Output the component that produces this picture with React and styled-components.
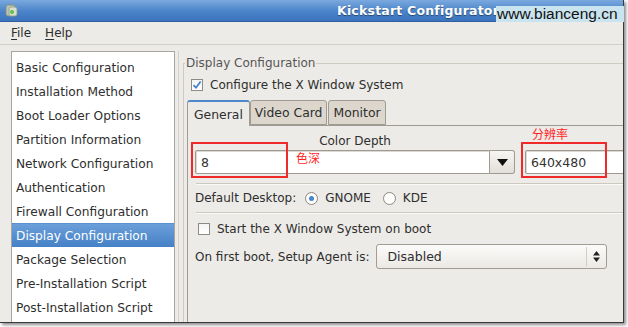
import React from "react";
import styled, { createGlobalStyle } from "styled-components";

const Global = createGlobalStyle`
  html, body { margin: 0; padding: 0; background: #ffffff; }
  body { font-family: "DejaVu Sans", Verdana, sans-serif; font-size: 12px; color: #2e2e2e; }
  * { box-sizing: border-box; }
`;

const Stage = styled.div`
  width: 628px;
  height: 327px;
  position: relative;
  overflow: hidden;
  background: #ffffff;
`;

const Window = styled.div`
  width: 624px;
  height: 323px;
  display: flex;
  flex-direction: column;
  overflow: hidden;
  background: #edebe7;
  border-right: 1px solid #3a3a3a;
  border-bottom: 1px solid #3a3a3a;
  box-shadow: 2px 2px 3px rgba(0, 0, 0, 0.45);
`;

const TitleBar = styled.div`
  height: 22px;
  flex: none;
  display: flex;
  align-items: center;
  padding-left: 5px;
  background: linear-gradient(#7aa9de, #4a83c9 55%, #3b74bd);
  border-bottom: 1px solid #2e5f9e;
`;

const AppIcon = styled.svg`
  width: 13px;
  height: 15px;
  flex: none;
`;

const Title = styled.div`
  margin-left: 319px;
  font-weight: bold;
  font-size: 12.5px;
  letter-spacing: 0.2px;
  color: #ffffff;
  text-shadow: 0 1px 1px rgba(0, 0, 0, 0.45);
  white-space: nowrap;
`;

const Watermark = styled.div`
  position: absolute;
  left: 496px;
  top: 6px;
  width: 128px;
  height: 16px;
  background: #c9e3ef;
  color: #111;
  font-family: "Liberation Sans", Arial, sans-serif;
  font-size: 15.5px;
  line-height: 16px;
  padding-left: 1px;
  white-space: nowrap;
  overflow: hidden;
`;

const MenuBar = styled.div`
  height: 23px;
  flex: none;
  display: flex;
  align-items: center;
  gap: 14px;
  padding-left: 11px;
  border-bottom: 1px solid #d3cfc8;
  background: #edebe7;
`;

const MenuItem = styled.span`
  font-size: 12px;
  color: #2e2e2e;
  & u { text-decoration: underline; text-underline-offset: 2px; }
`;

const Body = styled.div`
  flex: 1;
  display: flex;
  padding: 6px 0 0 11px;
  min-height: 0;
`;

const SideList = styled.div`
  width: 164px;
  flex: none;
  background: #ffffff;
  border: 1px solid #a9a49c;
  border-bottom: none;
  padding: 3px 0 0 0;
  display: flex;
  flex-direction: column;
`;

const SideItem = styled.div`
  height: 24px;
  line-height: 24px;
  padding-left: 4px;
  font-size: 12.2px;
  white-space: nowrap;
  color: ${(p) => (p.$selected ? "#ffffff" : "#2e2e2e")};
  background: ${(p) =>
    p.$selected ? "linear-gradient(#6a9fd9, #4581c6)" : "transparent"};
  border-top: 1px solid ${(p) => (p.$selected ? "#5a90cf" : "transparent")};
`;

const PaneHandle = styled.div`
  width: 8px;
  flex: none;
  display: flex;
  justify-content: center;
  &::before {
    content: "";
    width: 1px;
    background: #d6d2cb;
    margin-left: -1px;
  }
`;

const RightPane = styled.div`
  flex: 1;
  min-width: 0;
  padding-top: 5px;
  display: flex;
  flex-direction: column;
`;

const Frame = styled.fieldset`
  margin: 0;
  padding: 5px 0 0 3px;
  border: 1px solid #cfcac2;
  border-right: none;
  border-bottom: none;
  flex: 1;
  min-width: 0;
  display: flex;
  flex-direction: column;
`;

const Legend = styled.legend`
  padding: 0 1px;
  margin-left: -2px;
  color: #555;
  font-size: 12px;
  line-height: 15px;
`;

const CheckRow = styled.label`
  display: flex;
  align-items: center;
  gap: 7px;
  height: 18px;
  margin-left: ${(p) => p.$indent || 0}px;
  white-space: nowrap;
`;

const CheckBox = styled.span`
  width: 12px;
  height: 12px;
  flex: none;
  border: 1px solid #8f8a83;
  background: linear-gradient(#f4f4f4, #ffffff);
  display: flex;
  align-items: center;
  justify-content: center;
`;

const Notebook = styled.div`
  margin-top: 6px;
  display: flex;
  flex-direction: column;
  flex: 1;
`;

const TabRow = styled.div`
  display: flex;
  align-items: flex-end;
  height: 25px;
  position: relative;
  z-index: 1;
`;

const Tab = styled.div`
  height: ${(p) => (p.$active ? 26 : 25)}px;
  margin-bottom: ${(p) => (p.$active ? -1 : 0)}px;
  padding: 0 ${(p) => (p.$active ? 6 : 4)}px;
  margin-right: ${(p) => (p.$active ? 0 : 1)}px;
  display: flex;
  align-items: center;
  white-space: nowrap;
  font-size: 12.4px;
  border: 1px solid #9f9a92;
  border-bottom: ${(p) => (p.$active ? "none" : "1px solid #9f9a92")};
  border-top: ${(p) => (p.$active ? "2px solid #4d88cb" : "1px solid #9f9a92")};
  border-radius: 3px 3px 0 0;
  background: ${(p) => (p.$active ? "#edebe7" : "#dcd6cc")};
`;

const TabPanel = styled.div`
  flex: 1;
  border-top: 1px solid #9f9a92;
  border-left: 1px solid #9f9a92;
  padding: 8px 0 0 7px;
  display: flex;
  flex-direction: column;
`;

const DepthRow = styled.div`
  display: flex;
  gap: 10px;
  align-items: flex-end;
`;

const FieldColumn = styled.div`
  width: ${(p) => p.$w}px;
  flex: none;
  display: flex;
  flex-direction: column;
  align-items: stretch;
`;

const ColumnLabel = styled.div`
  text-align: center;
  height: 16px;
  line-height: 15px;
  white-space: nowrap;
`;

const Combo = styled.div`
  height: 24px;
  display: flex;
`;

const Entry = styled.div`
  flex: 1;
  height: 24px;
  background: #ffffff;
  border: 1px solid #9f9a92;
  border-radius: 2px 0 0 2px;
  box-shadow: inset 1px 1px 0 #dcd9d4;
  display: flex;
  align-items: center;
  padding-left: 5px;
  font-size: 12.5px;
  color: #333;
  white-space: nowrap;
`;

const ArrowButton = styled.div`
  width: 25px;
  flex: none;
  height: 24px;
  border: 1px solid #9f9a92;
  border-left: none;
  border-radius: 0 3px 3px 0;
  background: linear-gradient(#f7f6f4, #e2ded8);
  display: flex;
  align-items: center;
  justify-content: center;
`;

const Separator = styled.div`
  height: 2px;
  border-top: 1px solid #cdc8c0;
  border-bottom: 1px solid #fbfaf9;
  margin: ${(p) => p.$m};
`;

const DesktopRow = styled.div`
  display: flex;
  align-items: center;
  height: 18px;
  margin-top: 4px;
  white-space: nowrap;
`;

const RadioOption = styled.label`
  display: flex;
  align-items: center;
  gap: 7px;
  margin-left: ${(p) => p.$ml}px;
`;

const Radio = styled.span`
  width: 13px;
  height: 13px;
  flex: none;
  border-radius: 50%;
  border: 1px solid #8f8a83;
  background: radial-gradient(circle, #ffffff 60%, #f0efed);
  display: flex;
  align-items: center;
  justify-content: center;
  &::after {
    content: "";
    width: 5px;
    height: 5px;
    border-radius: 50%;
    background: ${(p) => (p.$on ? "#4a86cb" : "transparent")};
  }
`;

const BootRow = styled(CheckRow)`
  margin-top: 6px;
`;

const AgentRow = styled.div`
  display: flex;
  align-items: center;
  margin-top: 6px;
  white-space: nowrap;
`;

const SelectBox = styled.div`
  margin-left: 7px;
  width: 231px;
  height: 25px;
  border: 1px solid #a19c94;
  border-radius: 3px;
  background: linear-gradient(#fbfbfa, #ece9e4);
  display: flex;
  align-items: center;
  padding-left: 10px;
`;

const SelectText = styled.span`
  flex: 1;
  font-size: 12.5px;
`;

const SelectArrows = styled.span`
  width: 20px;
  height: 19px;
  border-left: 1px solid #d2cec7;
  display: flex;
  align-items: center;
  justify-content: center;
`;

const Note = styled.span`
  position: absolute;
  left: ${(p) => p.$x}px;
  top: ${(p) => p.$y}px;
  color: #ff1f1f;
  font-family: "Noto Sans CJK SC", sans-serif;
  font-size: 12px;
  line-height: 13px;
  white-space: nowrap;
`;

const RedBox = styled.div`
  position: absolute;
  left: ${(p) => p.$x}px;
  top: ${(p) => p.$y}px;
  width: ${(p) => p.$w}px;
  height: ${(p) => p.$h}px;
  border: 2px solid #f02a2a;
`;

const items = [
  "Basic Configuration",
  "Installation Method",
  "Boot Loader Options",
  "Partition Information",
  "Network Configuration",
  "Authentication",
  "Firewall Configuration",
  "Display Configuration",
  "Package Selection",
  "Pre-Installation Script",
  "Post-Installation Script",
];

export default function App() {
  return (
    <Stage>
      <Global />
      <Window>
        <TitleBar>
          <AppIcon viewBox="0 0 13 15">
            <rect x="1" y="2" width="9" height="11" rx="2" fill="#b9c6b3" stroke="#7f8b79" strokeWidth="0.8" />
            <rect x="4" y="4" width="8" height="9" rx="2" fill="#d7dfd1" stroke="#8d9987" strokeWidth="0.8" />
            <circle cx="7" cy="9" r="2" fill="#5fbf4a" />
          </AppIcon>
          <Title>Kickstart Configurator</Title>
        </TitleBar>
        <MenuBar>
          <MenuItem>
            <u>F</u>ile
          </MenuItem>
          <MenuItem>
            <u>H</u>elp
          </MenuItem>
        </MenuBar>
        <Body>
          <SideList>
            {items.map((t) => (
              <SideItem key={t} $selected={t === "Display Configuration"}>
                {t}
              </SideItem>
            ))}
          </SideList>
          <PaneHandle />
          <RightPane>
            <Frame>
              <Legend>Display Configuration</Legend>
              <CheckRow $indent={4}>
                <CheckBox>
                  <svg width="10" height="10" viewBox="0 0 10 10">
                    <path d="M1.5 5.2 L4 7.8 L8.6 1.6" fill="none" stroke="#3f7fc8" strokeWidth="1.7" />
                  </svg>
                </CheckBox>
                Configure the X Window System
              </CheckRow>
              <Notebook>
                <TabRow>
                  <Tab $active>General</Tab>
                  <Tab>Video Card</Tab>
                  <Tab>Monitor</Tab>
                </TabRow>
                <TabPanel>
                  <DepthRow>
                    <FieldColumn $w={320}>
                      <ColumnLabel>Color Depth</ColumnLabel>
                      <Combo>
                        <Entry>8</Entry>
                        <ArrowButton>
                          <svg width="11" height="7" viewBox="0 0 11 7">
                            <path d="M0 0 H11 L5.5 7 Z" fill="#111" />
                          </svg>
                        </ArrowButton>
                      </Combo>
                    </FieldColumn>
                    <FieldColumn $w={320}>
                      <ColumnLabel />
                      <Combo>
                        <Entry>640x480</Entry>
                      </Combo>
                    </FieldColumn>
                  </DepthRow>
                  <Separator $m="9px 0 0 1px" />
                  <DesktopRow>
                    Default Desktop:
                    <RadioOption $ml={9}>
                      <Radio $on />
                      GNOME
                    </RadioOption>
                    <RadioOption $ml={12}>
                      <Radio />
                      KDE
                    </RadioOption>
                  </DesktopRow>
                  <Separator $m="5px 0 0 1px" />
                  <BootRow $indent={3}>
                    <CheckBox />
                    Start the X Window System on boot
                  </BootRow>
                  <AgentRow>
                    On first boot, Setup Agent is:
                    <SelectBox>
                      <SelectText>Disabled</SelectText>
                      <SelectArrows>
                        <svg width="7" height="11" viewBox="0 0 7 11">
                          <path d="M0 4.5 L3.5 0 L7 4.5 Z M0 6.5 L3.5 11 L7 6.5 Z" fill="#222" />
                        </svg>
                      </SelectArrows>
                    </SelectBox>
                  </AgentRow>
                </TabPanel>
              </Notebook>
            </Frame>
          </RightPane>
        </Body>
      </Window>
      <Watermark>www.bianceng.cn</Watermark>
      <RedBox $x={191} $y={142} $w={97} $h={36} />
      <Note $x={296} $y={151}>色深</Note>
      <RedBox $x={521} $y={142} $w={86} $h={36} />
      <Note $x={532} $y={127}>分辨率</Note>
    </Stage>
  );
}
